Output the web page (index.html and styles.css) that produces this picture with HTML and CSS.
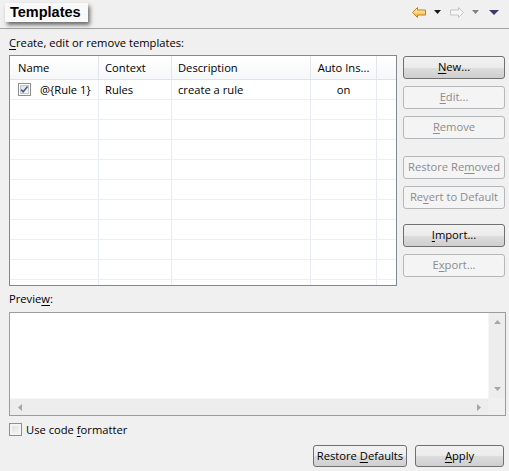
FILE: index.html
```html
<!DOCTYPE html>
<html>
<head>
<meta charset="utf-8">
<link rel="stylesheet" href="styles.css">
</head>
<body>
<div class="page">
  <div class="topbar">
    <div class="title">Templates</div>
    <div class="tools">
      <svg class="arrow" width="14" height="11" viewBox="0 0 14 11">
        <defs><linearGradient id="gb" x1="0" y1="0" x2="0" y2="1"><stop offset="0" stop-color="#fff4c8"/><stop offset="1" stop-color="#f2b43a"/></linearGradient></defs>
        <path d="M0.5 5.5 L5.5 0.5 L5.5 3 L13.5 3 L13.5 8 L5.5 8 L5.5 10.5 Z" fill="url(#gb)" stroke="#c2801c" stroke-width="1" stroke-linejoin="round"/>
      </svg>
      <svg class="tri t1" width="7" height="4" viewBox="0 0 7 4"><path d="M0 0 H7 L3.5 4 Z" fill="#1a1a1a"/></svg>
      <svg class="arrow a2" width="14" height="11" viewBox="0 0 14 11">
        <path d="M13.5 5.5 L8.5 0.5 L8.5 3 L0.5 3 L0.5 8 L8.5 8 L8.5 10.5 Z" fill="#f6f6f6" stroke="#c4c4c4" stroke-width="1" stroke-linejoin="round"/>
      </svg>
      <svg class="tri t2" width="7" height="4" viewBox="0 0 7 4"><path d="M0 0 H7 L3.5 4 Z" fill="#808080"/></svg>
      <svg class="tri t3" width="10" height="5" viewBox="0 0 10 5"><path d="M0 0 H10 L5 5 Z" fill="#3d3a6e"/></svg>
    </div>
  </div>
  <div class="content">
    <div class="label"><u>C</u>reate, edit or remove templates:</div>
    <div class="main">
      <div class="table">
        <div class="thead">
          <div class="th c1 first">Name</div>
          <div class="th c2">Context</div>
          <div class="th c3">Description</div>
          <div class="th c4 center">Auto Ins...</div>
          <div class="th c5"></div>
        </div>
        <div class="tbody">
          <div class="tr">
            <div class="td c1 namecell">
              <svg class="cb" width="13" height="13" viewBox="0 0 13 13">
                <defs><linearGradient id="cbg" x1="0" y1="0" x2="1" y2="1"><stop offset="0" stop-color="#dcdcdc"/><stop offset="1" stop-color="#ffffff"/></linearGradient></defs>
                <rect x="0.5" y="0.5" width="12" height="12" fill="#ffffff" stroke="#8e8f8f"/>
                <rect x="2.5" y="2.5" width="8" height="8" fill="url(#cbg)" stroke="#c4c7cc" stroke-width="1"/>
                <path d="M3.2 6.6 L5.2 8.8 L9.6 3.6" fill="none" stroke="#4a5c8f" stroke-width="1.6"/>
              </svg>
              <span>@{Rule 1}</span>
            </div>
            <div class="td c2">Rules</div>
            <div class="td c3">create a rule</div>
            <div class="td c4 center">on</div>
            <div class="td c5"></div>
          </div>
          <div class="tr"><div class="td c1"></div><div class="td c2"></div><div class="td c3"></div><div class="td c4"></div><div class="td c5"></div></div>
          <div class="tr"><div class="td c1"></div><div class="td c2"></div><div class="td c3"></div><div class="td c4"></div><div class="td c5"></div></div>
          <div class="tr"><div class="td c1"></div><div class="td c2"></div><div class="td c3"></div><div class="td c4"></div><div class="td c5"></div></div>
          <div class="tr"><div class="td c1"></div><div class="td c2"></div><div class="td c3"></div><div class="td c4"></div><div class="td c5"></div></div>
          <div class="tr"><div class="td c1"></div><div class="td c2"></div><div class="td c3"></div><div class="td c4"></div><div class="td c5"></div></div>
          <div class="tr"><div class="td c1"></div><div class="td c2"></div><div class="td c3"></div><div class="td c4"></div><div class="td c5"></div></div>
          <div class="tr"><div class="td c1"></div><div class="td c2"></div><div class="td c3"></div><div class="td c4"></div><div class="td c5"></div></div>
          <div class="tr"><div class="td c1"></div><div class="td c2"></div><div class="td c3"></div><div class="td c4"></div><div class="td c5"></div></div>
          <div class="tr"><div class="td c1"></div><div class="td c2"></div><div class="td c3"></div><div class="td c4"></div><div class="td c5"></div></div>
          <div class="tr"><div class="td c1"></div><div class="td c2"></div><div class="td c3"></div><div class="td c4"></div><div class="td c5"></div></div>
        </div>
      </div>
      <div class="buttons">
        <div class="btn"><u>N</u>ew...</div>
        <div class="btn disabled"><u>E</u>dit...</div>
        <div class="btn disabled"><u>R</u>emove</div>
        <div class="btn disabled group1">Restore Re<u>m</u>oved</div>
        <div class="btn disabled">Re<u>v</u>ert to Default</div>
        <div class="btn group2"><u>I</u>mport...</div>
        <div class="btn disabled">E<u>x</u>port...</div>
      </div>
    </div>
    <div class="label preview-label">Previe<u>w</u>:</div>
    <div class="preview">
      <div class="pv-top">
        <div class="pv-area"></div>
        <div class="vscroll">
          <svg width="7" height="4" viewBox="0 0 7 4"><path d="M0 4 H7 L3.5 0 Z" fill="#a6a6a6"/></svg>
          <svg width="7" height="4" viewBox="0 0 7 4"><path d="M0 0 H7 L3.5 4 Z" fill="#a6a6a6"/></svg>
        </div>
      </div>
      <div class="pv-bottom">
        <div class="hscroll">
          <svg width="4" height="7" viewBox="0 0 4 7"><path d="M4 0 V7 L0 3.5 Z" fill="#a6a6a6"/></svg>
          <svg width="4" height="7" viewBox="0 0 4 7"><path d="M0 0 V7 L4 3.5 Z" fill="#a6a6a6"/></svg>
        </div>
        <div class="corner"></div>
      </div>
    </div>
    <div class="check-row">
      <span class="box"></span>
      <span>Use code <u>f</u>ormatter</span>
    </div>
    <div class="footer">
      <div class="btn fbtn wide">Restore <u>D</u>efaults</div>
      <div class="btn fbtn apply"><u>A</u>pply</div>
    </div>
  </div>
</div>
</body>
</html>
```
FILE: styles.css
```css
html, body {
  margin: 0;
  padding: 0;
}
body {
  background: #f0f0f0;
  font-family: "Open Sans", "Noto Sans", sans-serif;
  font-size: 11.2px;
  color: #000;
}
.page {
  width: 509px;
  height: 471px;
  overflow: hidden;
}
u {
  text-decoration: underline;
  text-decoration-thickness: 1px;
  text-underline-offset: 2px;
}
.topbar {
  height: 28px;
  border-bottom: 1px solid #a3a3a3;
  display: flex;
  align-items: flex-start;
  padding-left: 5px;
  box-sizing: content-box;
}
.title {
  margin-top: 3px;
  width: 78px;
  height: 19px;
  padding-left: 5px;
  background: #f9f9f9;
  font-family: "Liberation Sans", Arial, sans-serif;
  font-weight: bold;
  font-size: 14.5px;
  line-height: 19px;
  box-shadow: 2px 3px 4px rgba(0, 0, 0, 0.55);
}
.tools {
  margin-left: auto;
  padding-right: 10px;
  display: flex;
  align-items: flex-start;
}
.tools svg { display: block; }
.arrow { margin-top: 7px; }
.tri { margin-top: 10px; }
.t1 { margin-left: 8px; }
.a2 { margin-left: 9px; }
.t2 { margin-left: 8px; }
.t3 { margin-left: 10px; }

.content {
  padding: 0 3px 0 9px;
}
.label {
  line-height: 15px;
  height: 15px;
  margin-top: 6px;
}
.main {
  display: flex;
  margin-top: 5px;
  gap: 6px;
  align-items: flex-start;
}
.table {
  width: 388px;
  height: 231px;
  box-sizing: border-box;
  border: 1px solid #828790;
  background: #fff;
  overflow: hidden;
}
.thead {
  display: flex;
  height: 24px;
  box-sizing: border-box;
  border-bottom: 1px solid #e0e2e6;
  background: linear-gradient(#ffffff, #f6f7f9);
}
.th {
  box-sizing: border-box;
  border-right: 1px solid #e3e5e8;
  line-height: 22px;
  padding-top: 1px;
  padding-left: 6px;
  white-space: nowrap;
  overflow: hidden;
}
.th.first { padding-left: 8px; }
.c1 { width: 89px; }
.c2 { width: 73px; }
.c3 { width: 139px; }
.c4 { width: 66px; }
.c5 { width: 19px; }
.th.c5, .td.c5 { border-right: none; }
.center { text-align: center; padding-left: 0 !important; }
.tr {
  display: flex;
  height: 20px;
  box-sizing: border-box;
  border-bottom: 1px solid #eeeeee;
}
.td {
  box-sizing: border-box;
  border-right: 1px solid #e8edf5;
  line-height: 19px;
  padding-left: 6px;
  white-space: nowrap;
  overflow: hidden;
}
.namecell {
  display: flex;
  align-items: center;
  padding-left: 8px;
}
.namecell .cb {
  display: block;
  flex: none;
  margin-right: 9px;
  margin-top: 0px;
}
.buttons {
  width: 102px;
  display: flex;
  flex-direction: column;
  gap: 7px;
  margin-top: 1px;
}
.btn {
  height: 23px;
  box-sizing: border-box;
  border: 1px solid #707070;
  border-radius: 3px;
  background: linear-gradient(#f2f2f2 0%, #ebebeb 50%, #dddddd 51%, #cfcfcf 100%);
  text-align: center;
  line-height: 20px;
  white-space: nowrap;
}
.btn.disabled {
  border-color: #b5b8ba;
  background: #f4f4f4;
  color: #8c8c8c;
}
.group1 { margin-top: 10px; }
.group2 { margin-top: 8px; }

.preview-label {
  margin-top: 5px;
}
.preview {
  margin-top: 6px;
  height: 104px;
  box-sizing: border-box;
  border: 1px solid #9c9c9c;
  background: #fff;
  display: flex;
  flex-direction: column;
}
.pv-top {
  flex: 1;
  display: flex;
}
.pv-area { flex: 1; }
.vscroll {
  width: 17px;
  background: #ededed;
  border-left: 1px solid #f6f6f6;
  box-sizing: border-box;
  display: flex;
  flex-direction: column;
  align-items: center;
  justify-content: space-between;
  padding: 7px 0 7px;
}
.vscroll svg, .hscroll svg { display: block; }
.pv-bottom {
  height: 17px;
  display: flex;
}
.hscroll {
  flex: 1;
  background: #ededed;
  border-top: 1px solid #f6f6f6;
  box-sizing: border-box;
  display: flex;
  align-items: center;
  justify-content: space-between;
  padding: 0 7px 0 8px;
}
.corner {
  width: 17px;
  background: #f0f0f0;
}
.check-row {
  margin-top: 6px;
  height: 15px;
  line-height: 15px;
  display: flex;
  align-items: center;
  gap: 4px;
}
.box {
  width: 13px;
  height: 13px;
  box-sizing: border-box;
  border: 1px solid #8e8f8f;
  background: linear-gradient(135deg, #dcdcdc, #f8f8f8);
  box-shadow: inset 0 0 0 2px #f4f4f4;
}
.footer {
  margin-top: 8px;
  display: flex;
  justify-content: flex-end;
  gap: 8px;
  padding-right: 2px;
}
.fbtn { height: 22px; line-height: 19px; }
.wide { width: 94px; }
.apply { width: 89px; }
```
